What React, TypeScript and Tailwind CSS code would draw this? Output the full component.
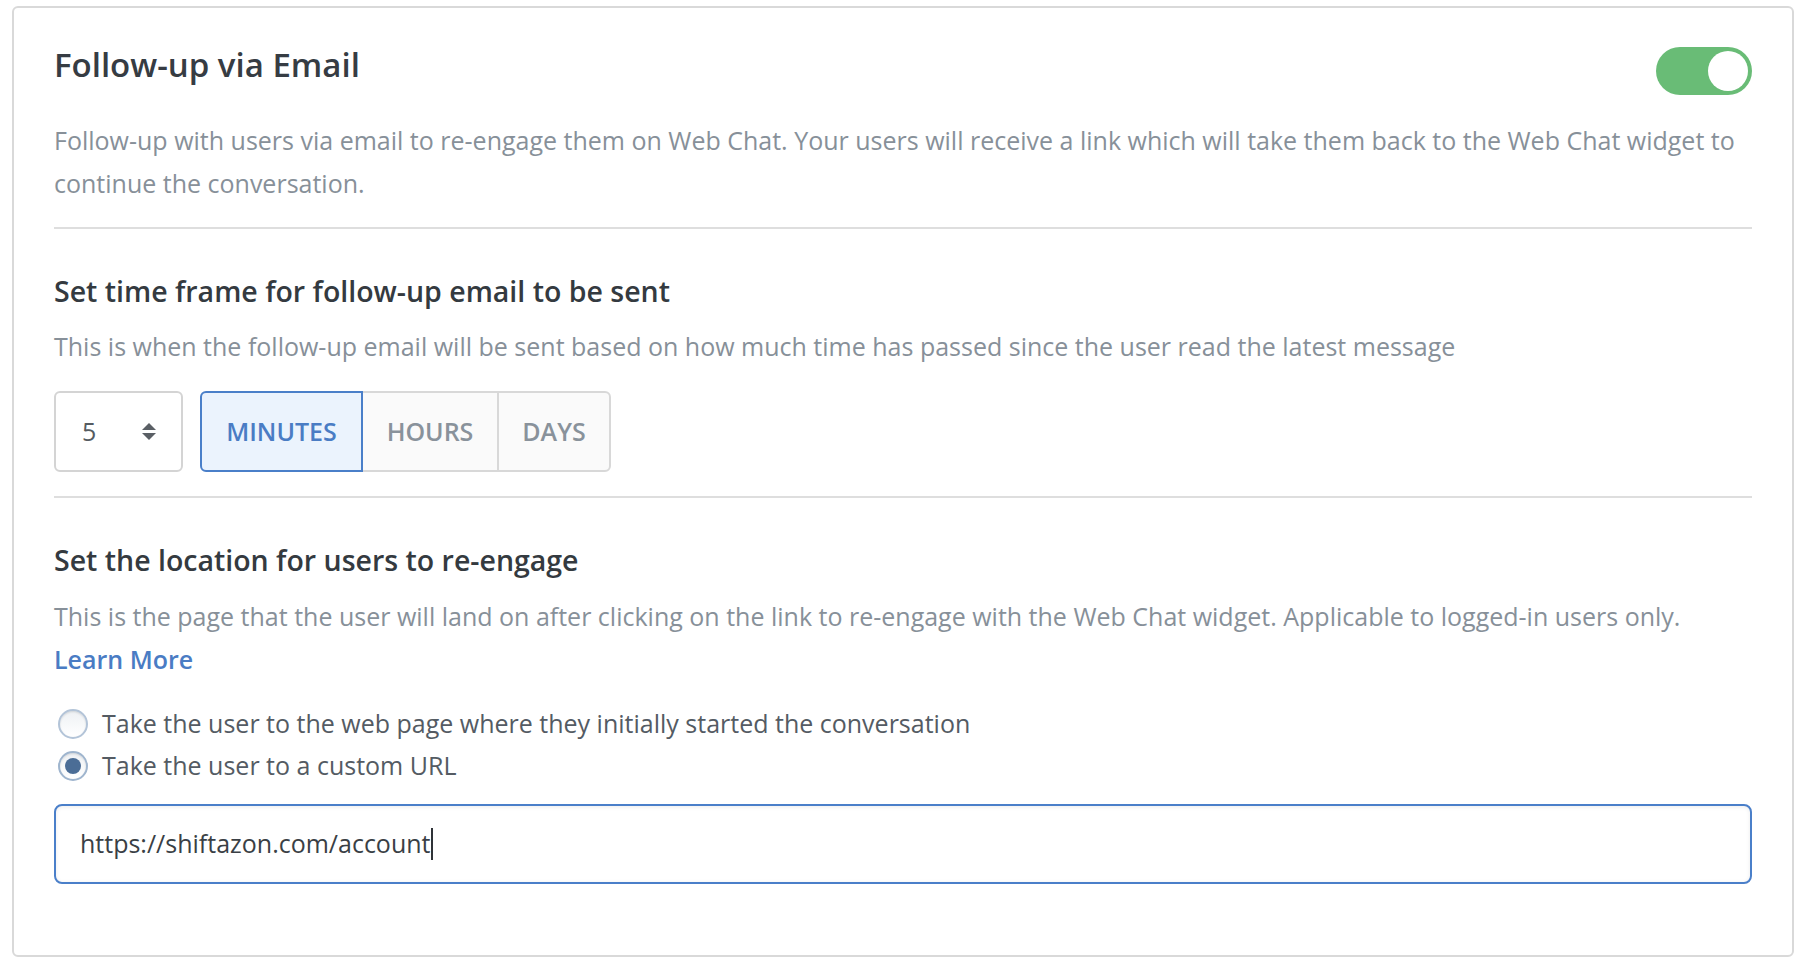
import { useState } from "react";

const font = { fontFamily: '"Open Sans", "Noto Sans", sans-serif' };

function Toggle({ on }: { on: boolean }) {
  return (
    <div
      className={`mt-[3px] flex h-[48px] w-[96px] shrink-0 items-center rounded-full p-[4px] ${
        on ? "justify-end bg-[#69bc76]" : "justify-start bg-[#d6d6d6]"
      }`}
    >
      <div className="h-[40px] w-[40px] rounded-full bg-white" />
    </div>
  );
}

function Radio({ checked, label }: { checked: boolean; label: string }) {
  return (
    <label className="flex h-[42px] items-center gap-[14px]">
      <span
        className={`ml-[4px] flex h-[30px] w-[30px] items-center justify-center rounded-full border-2 bg-gradient-to-b from-[#eef1f4] to-white shadow-[inset_0_1px_2px_rgba(0,0,0,0.12)] ${
          checked ? "border-[#9fb5ce]" : "border-[#b3c4d8]"
        }`}
      >
        {checked && <span className="h-[16px] w-[16px] rounded-full bg-[#4b6d96]" />}
      </span>
      <span className="text-[25px] text-[#545b63]">{label}</span>
    </label>
  );
}

export default function App() {
  const [unit, setUnit] = useState("MINUTES");
  const units = [
    { name: "MINUTES", w: "w-[163px]" },
    { name: "HOURS", w: "w-[138px]" },
    { name: "DAYS", w: "w-[114px]" },
  ];

  return (
    <div className="min-h-screen bg-white pl-[12px] pr-[8px] pt-[6px]" style={font}>
      <div className="rounded-[6px] border-2 border-[#d9d9d9] bg-white px-[40px] pb-[71px] pt-[36px]">
        <div className="flex items-start justify-between">
          <h1 className="text-[33px] font-semibold leading-[42px] text-[#363c43]">Follow-up via Email</h1>
          <Toggle on />
        </div>
        <p className="mt-[24px] text-[25px] leading-[43px] text-[#879099]">
          Follow-up with users via email to re-engage them on Web Chat. Your users will receive a link which will take
          them back to the Web Chat widget to continue the conversation.
        </p>

        <div className="mt-[22px] h-[2px] bg-[#dedede]" />

        <h2 className="mt-[44px] text-[28.5px] font-semibold leading-[36px] text-[#343a40]">
          Set time frame for follow-up email to be sent
        </h2>
        <p className="mt-[16px] text-[25px] leading-[43px] text-[#879099]">
          This is when the follow-up email will be sent based on how much time has passed since the user read the latest
          message
        </p>

        <div className="mt-[23px] flex gap-[17px]">
          <div className="flex h-[81px] w-[129px] items-center justify-between rounded-[6px] border-2 border-[#d4d4d4] pl-[26px] pr-[24px]">
            <span className="text-[25px] text-[#555b61]">5</span>
            <svg width="16" height="20" viewBox="0 0 16 20" className="text-[#5a5f65]">
              <path d="M8 1 L15 8 L1 8 Z" fill="currentColor" />
              <path d="M1 11 L15 11 L8 18 Z" fill="currentColor" />
            </svg>
          </div>
          <div className="flex h-[81px]">
            {units.map((u, i) => {
              const active = unit === u.name;
              return (
                <button
                  key={u.name}
                  onClick={() => setUnit(u.name)}
                  className={`${u.w} flex items-center justify-center border-2 text-[25px] font-semibold ${
                    active
                      ? "z-10 border-[#4a7fc9] bg-[#ebf3fd] text-[#4a7cc4]"
                      : "border-[#d8d8d8] bg-[#fafafa] text-[#89929b]"
                  } ${i === 0 ? "rounded-l-[6px]" : "-ml-[2px]"} ${i === units.length - 1 ? "rounded-r-[6px]" : ""}`}
                >
                  {u.name}
                </button>
              );
            })}
          </div>
        </div>

        <div className="mt-[24px] h-[2px] bg-[#dedede]" />

        <h2 className="mt-[44px] text-[28.5px] font-semibold leading-[36px] text-[#343a40]">
          Set the location for users to re-engage
        </h2>
        <p className="mt-[17px] text-[25px] leading-[43px] text-[#879099]">
          This is the page that the user will land on after clicking on the link to re-engage with the Web Chat widget.
          Applicable to logged-in users only.
          <br />
          <a className="font-semibold text-[#4a7cc4]">Learn More</a>
        </p>

        <div className="mt-[22px] flex flex-col">
          <Radio checked={false} label="Take the user to the web page where they initially started the conversation" />
          <Radio checked label="Take the user to a custom URL" />
        </div>

        <div className="mt-[17px] flex h-[80px] items-center rounded-[8px] border-2 border-[#4a7fc9] px-[24px] shadow-[inset_0_1px_4px_rgba(0,0,0,0.08)]">
          <span className="text-[25px] text-[#3a3f45]">https://shiftazon.com/account</span>
          <span className="ml-[1px] h-[32px] w-[2px] bg-[#2f3338]" />
        </div>
      </div>
    </div>
  );
}
